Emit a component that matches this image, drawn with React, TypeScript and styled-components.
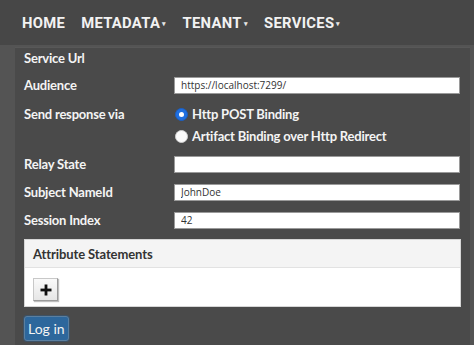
import React from "react";
import styled, { createGlobalStyle } from "styled-components";

const Global = createGlobalStyle`
  html, body { margin: 0; padding: 0; }
  body {
    background: #545454;
    font-family: Lato, "Noto Sans", sans-serif;
    width: 474px;
    height: 345px;
    overflow: hidden;
  }
`;

const Header = styled.nav`
  height: 45px;
  background: #474747;
  display: flex;
  align-items: center;
  padding-left: 22px;
  gap: 16px;
  box-sizing: border-box;
  padding-top: 1px;
`;

const NavItem = styled.span`
  color: #f2f2f2;
  font-family: Roboto, sans-serif;
  font-weight: 700;
  font-size: 14.8px;
  letter-spacing: 0.3px;
  display: inline-flex;
  align-items: baseline;
`;

const Caret = styled.span`
  font-size: 7px;
  margin-left: 2px;
  transform: translateY(-2px);
  color: #e6e6e6;
`;

const Panel = styled.main`
  margin: 2px 4px 0 15px;
  background: #4a4a4a;
  border-top: 1px solid #585858;
  padding: 0 9px 6px 9px;
  min-height: 298px;
  box-sizing: border-box;
`;

const Row = styled.div<{ $h?: number; $mt?: number }>`
  display: grid;
  grid-template-columns: 150px 1fr;
  align-items: center;
  height: ${(p) => p.$h ?? 28}px;
  margin-top: ${(p) => p.$mt ?? 0}px;
  padding-right: 1px;
`;

const Label = styled.label`
  color: #f4f4f4;
  font-weight: 700;
  font-size: 13px;
  letter-spacing: -0.2px;
`;

const Input = styled.input`
  height: 17px;
  box-sizing: border-box;
  border: 1px solid #9a9a9a;
  background: #fff;
  font-family: "Open Sans", sans-serif;
  font-size: 10px;
  color: #333;
  padding: 0 6px;
  width: 100%;
  outline: none;
`;

const RadioGroupRow = styled.div`
  display: grid;
  grid-template-columns: 150px 1fr;
  padding: 4px 1px 3px 0;
`;

const TopLabel = styled(Label)`
  line-height: 22px;
`;

const RadioList = styled.div`
  display: flex;
  flex-direction: column;
`;

const RadioItem = styled.label`
  display: flex;
  align-items: center;
  height: 22px;
  gap: 4px;
  color: #f4f4f4;
  font-weight: 700;
  font-size: 13px;
  letter-spacing: -0.2px;
  padding-left: 1px;
`;

const RadioDot = styled.span<{ $checked?: boolean }>`
  width: 13px;
  height: 13px;
  border-radius: 50%;
  box-sizing: border-box;
  background: ${(p) => (p.$checked ? "#1f6fe0" : "#fbfbfb")};
  border: 1px solid ${(p) => (p.$checked ? "#1a5fc4" : "#d0d0d0")};
  display: inline-flex;
  align-items: center;
  justify-content: center;
  &::after {
    content: "";
    width: 5px;
    height: 5px;
    border-radius: 50%;
    background: #fff;
    display: ${(p) => (p.$checked ? "block" : "none")};
  }
`;

const Card = styled.section`
  margin-top: 5px;
  background: #fff;
  border: 1px solid #d6d6d6;
`;

const CardHeader = styled.div`
  height: 27px;
  background: #f4f4f4;
  border-bottom: 1px solid #e2e2e2;
  display: flex;
  align-items: center;
  padding-left: 8px;
  font-weight: 700;
  font-size: 13px;
  letter-spacing: -0.1px;
  color: #333;
`;

const CardBody = styled.div`
  padding: 10px 8px 5px;
  height: 38px;
  box-sizing: border-box;
`;

const AddButton = styled.button`
  width: 25px;
  height: 23px;
  border: 1px solid #c8c8c8;
  border-right-color: #9a9a9a;
  border-bottom-color: #9a9a9a;
  background: linear-gradient(#fafafa, #e6e6e6);
  padding: 0;
  display: flex;
  align-items: center;
  justify-content: center;
  box-shadow: 1px 1px 1px rgba(0, 0, 0, 0.25);
`;

const LoginButton = styled.button`
  margin-top: 9px;
  height: 25px;
  padding: 0 3px;
  background: #2d679c;
  color: #f4f4f4;
  border: 1px solid #5a7fa0;
  border-radius: 3px;
  font-family: Lato, sans-serif;
  font-size: 14px;
  box-shadow: 0 0 0 1px #3d5266;
`;

export default function App() {
  return (
    <>
      <Global />
      <Header>
        <NavItem>HOME</NavItem>
        <NavItem>
          METADATA<Caret>▾</Caret>
        </NavItem>
        <NavItem>
          TENANT<Caret>▾</Caret>
        </NavItem>
        <NavItem>
          SERVICES<Caret>▾</Caret>
        </NavItem>
      </Header>
      <Panel>
        <Row $h={20}>
          <Label>Service Url</Label>
        </Row>
        <Row $mt={3}>
          <Label>Audience</Label>
          <Input defaultValue="https://localhost:7299/" />
        </Row>
        <RadioGroupRow>
          <TopLabel>Send response via</TopLabel>
          <RadioList>
            <RadioItem>
              <RadioDot $checked />
              Http POST Binding
            </RadioItem>
            <RadioItem>
              <RadioDot />
              Artifact Binding over Http Redirect
            </RadioItem>
          </RadioList>
        </RadioGroupRow>
        <Row>
          <Label>Relay State</Label>
          <Input defaultValue="" />
        </Row>
        <Row>
          <Label>Subject NameId</Label>
          <Input defaultValue="JohnDoe" />
        </Row>
        <Row>
          <Label>Session Index</Label>
          <Input defaultValue="42" />
        </Row>
        <Card>
          <CardHeader>Attribute Statements</CardHeader>
          <CardBody>
            <AddButton aria-label="add">
              <svg width="12" height="12" viewBox="0 0 12 12">
                <rect x="4.6" y="0.5" width="2.8" height="11" fill="#111" />
                <rect x="0.5" y="4.6" width="11" height="2.8" fill="#111" />
              </svg>
            </AddButton>
          </CardBody>
        </Card>
        <LoginButton>Log in</LoginButton>
      </Panel>
    </>
  );
}
